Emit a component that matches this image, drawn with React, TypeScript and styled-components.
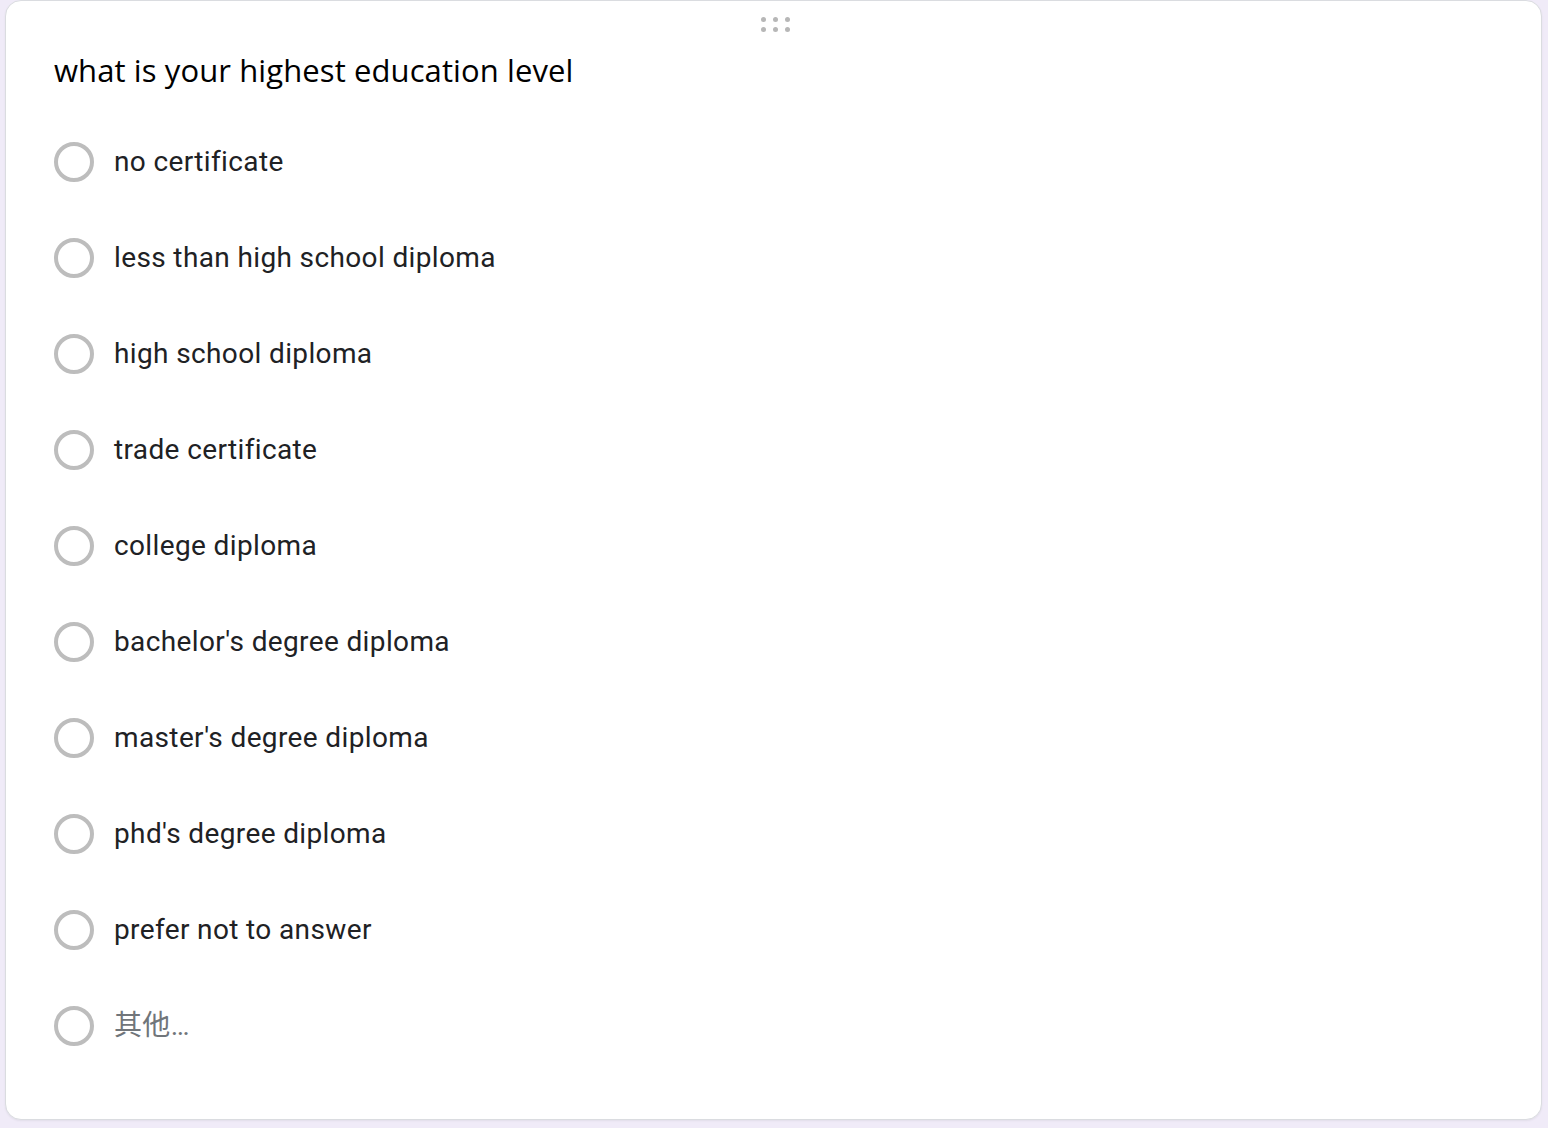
import React from "react";
import styled, { createGlobalStyle } from "styled-components";

const GlobalStyle = createGlobalStyle`
  html, body {
    margin: 0;
    padding: 0;
    background: #f0ebf8;
  }
  body {
    font-family: Roboto, "Noto Sans CJK SC", sans-serif;
  }
`;

const Page = styled.div`
  padding: 0 6px 8px 5px;
  width: 1548px;
  height: 1128px;
  box-sizing: border-box;
`;

const Card = styled.div`
  box-sizing: border-box;
  width: 1537px;
  height: 1120px;
  background: #ffffff;
  border: 1px solid #dadce0;
  border-radius: 16px;
  box-shadow: 0 1px 2px rgba(60, 64, 67, 0.08);
  display: flex;
  flex-direction: column;
  padding: 0 48px 0 48px;
`;

const HandleRow = styled.div`
  display: flex;
  justify-content: center;
  padding-top: 16px;
  height: 34px;
  box-sizing: border-box;
`;

const Dots = styled.div`
  display: grid;
  grid-template-columns: repeat(3, 5px);
  grid-auto-rows: 5px;
  column-gap: 7px;
  row-gap: 5px;
  margin-left: 3px;
`;

const Dot = styled.span`
  width: 5px;
  height: 5px;
  border-radius: 50%;
  background: #b7b7b7;
`;

const Title = styled.div`
  font-family: "Open Sans", sans-serif;
  font-size: 31px;
  line-height: 48px;
  color: #000000;
  letter-spacing: 0.1px;
  margin-top: 11px;
  margin-bottom: 20px;
`;

const Options = styled.div`
  display: flex;
  flex-direction: column;
`;

const OptionRow = styled.label`
  display: flex;
  align-items: center;
  height: 96px;
  gap: 20px;
`;

const Radio = styled.span`
  box-sizing: border-box;
  width: 40px;
  height: 40px;
  border-radius: 50%;
  border: 4px solid #bdbdbd;
  flex-shrink: 0;
`;

const OptionText = styled.span<{ $muted?: boolean }>`
  font-family: Roboto, "Noto Sans CJK SC", sans-serif;
  font-size: 28px;
  letter-spacing: 0.37px;
  line-height: 40px;
  color: ${(p) => (p.$muted ? "#70757a" : "#202124")};
`;

const options = [
  "no certificate",
  "less than high school diploma",
  "high school diploma",
  "trade certificate",
  "college diploma",
  "bachelor's degree diploma",
  "master's degree diploma",
  "phd's degree diploma",
  "prefer not to answer",
];

export default function App() {
  return (
    <>
      <GlobalStyle />
      <Page>
        <Card>
          <HandleRow>
            <Dots>
              {Array.from({ length: 6 }).map((_, i) => (
                <Dot key={i} />
              ))}
            </Dots>
          </HandleRow>
          <Title>what is your highest education level</Title>
          <Options>
            {options.map((o) => (
              <OptionRow key={o}>
                <Radio />
                <OptionText>{o}</OptionText>
              </OptionRow>
            ))}
            <OptionRow>
              <Radio />
              <OptionText $muted>其他…</OptionText>
            </OptionRow>
          </Options>
        </Card>
      </Page>
    </>
  );
}
